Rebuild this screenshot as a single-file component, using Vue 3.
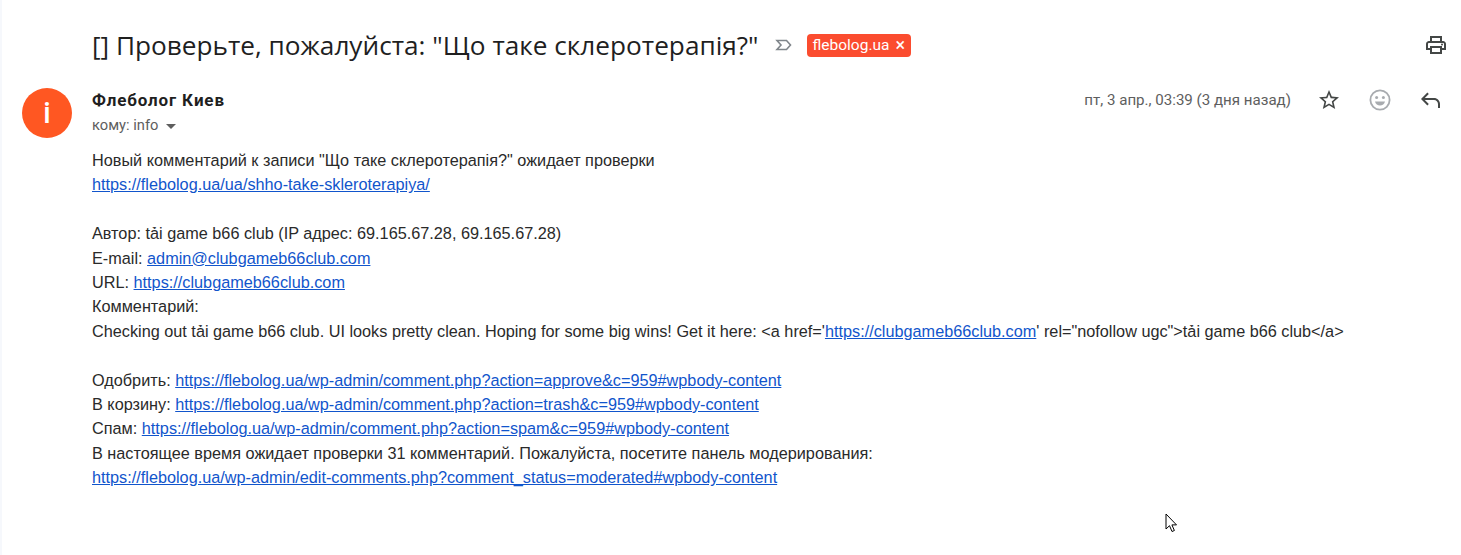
<script setup>
</script>

<template>
  <div class="page">
    <div class="subject-row">
      <h2 class="subject">[] Проверьте, пожалуйста: "Що таке склеротерапія?"</h2>
      <svg class="imp" width="18" height="14" viewBox="0 0 18 14"><path d="M2 2.500h9.500l4 4.500-4 4.500H2L6 7z" fill="none" stroke="#80868b" stroke-width="1.600"/></svg>
      <span class="label">flebolog.ua<span class="x">×</span></span>
      <svg class="print" width="24" height="24" viewBox="0 0 24 24"><path fill="#444746" d="M19 8h-1V3H6v5H5c-1.660 0-3 1.340-3 3v6h4v4h12v-4h4v-6c0-1.660-1.340-3-3-3zM8 5h8v3H8V5zm8 14H8v-4h8v4zm2-4v-2H6v2H4v-4c0-.55.45-1 1-1h14c.55 0 1 .45 1 1v4h-2z"/><circle cx="18" cy="11.500" r="1" fill="#444746"/></svg>
    </div>
    <div class="message">
      <div class="avatar">i</div>
      <div class="content">
        <div class="head">
          <div class="who">
            <div class="sender">Флеболог Киев</div>
            <div class="to">кому: info <span class="caret"></span></div>
          </div>
          <div class="meta">
            <span class="date">пт, 3 апр., 03:39 (3 дня назад)</span>
            <svg class="star" width="24" height="24" viewBox="0 0 24 24"><path fill="#444746" d="M22 9.240l-7.190-.62L12 2 9.190 8.630 2 9.240l5.460 4.730L5.820 21 12 17.270 18.180 21l-1.630-7.030L22 9.240zM12 15.400l-3.760 2.270 1-4.280-3.320-2.880 4.380-.38L12 6.100l1.710 4.040 4.380.38-3.320 2.880 1 4.280L12 15.400z"/></svg>
            <svg class="smile" width="24" height="24" viewBox="0 0 24 24"><circle cx="12" cy="12" r="9.600" fill="none" stroke="#a8abaf" stroke-width="1.800"/><circle cx="8.600" cy="9.600" r="1.500" fill="#a8abaf"/><circle cx="15.400" cy="9.600" r="1.500" fill="#a8abaf"/><path d="M7 13.500h10c-.6 2.600-2.600 4-5 4s-4.400-1.400-5-4z" fill="#a8abaf"/></svg>
            <svg class="reply" width="24" height="24" viewBox="0 0 24 24"><path fill="#444746" d="M20 20v-4c0-2.200-1.800-4-4-4H6.800l4 4-1.400 1.400L3 11l6.400-6.400L10.800 6l-4 4H16c3.300 0 6 2.700 6 6v4h-2z"/></svg>
          </div>
        </div>
        <div class="body">
          <div>Новый комментарий к записи "Що таке склеротерапія?" ожидает проверки</div>
          <div><a>https://flebolog.ua/ua/shho-take-skleroterapiya/</a></div>
          <br>
          <div>Автор: tải game b66 club (IP адрес: 69.165.67.28, 69.165.67.28)</div>
          <div>E-mail: <a>admin@clubgameb66club.com</a></div>
          <div>URL: <a>https://clubgameb66club.com</a></div>
          <div>Комментарий:</div>
          <div>Checking out tải game b66 club. UI looks pretty clean. Hoping for some big wins! Get it here: &lt;a href='<a>https://clubgameb66club.com</a>' rel="nofollow ugc"&gt;tải game b66 club&lt;/a&gt;</div>
          <br>
          <div>Одобрить: <a>https://flebolog.ua/wp-admin/comment.php?action=approve&amp;c=959#wpbody-content</a></div>
          <div>В корзину: <a>https://flebolog.ua/wp-admin/comment.php?action=trash&amp;c=959#wpbody-content</a></div>
          <div>Спам: <a>https://flebolog.ua/wp-admin/comment.php?action=spam&amp;c=959#wpbody-content</a></div>
          <div>В настоящее время ожидает проверки 31 комментарий. Пожалуйста, посетите панель модерирования:</div>
          <div><a>https://flebolog.ua/wp-admin/edit-comments.php?comment_status=moderated#wpbody-content</a></div>
        </div>
      </div>
    </div>
    <svg class="cursor" width="13" height="20" viewBox="0 0 13 20"><path d="M1 1v15l3.500-3.300 2.500 5.800 2.400-1-2.500-5.600h4.600z" fill="#fff" stroke="#000" stroke-width="1"/></svg>
  </div>
</template>

<style>
html, body { background: #fff; }
</style>

<style scoped>
.page {
  position: relative;
  height: 555px;
  box-sizing: border-box;
  overflow: hidden;
  background: #fff;
  border-left: 2px solid #f6f8fc;
  font-family: "Liberation Sans", Arial, sans-serif;
  color: #222;
}
.subject-row {
  display: flex;
  align-items: center;
  height: 40px;
  padding: 25px 13px 1px 90px;
}
.subject {
  margin: 0;
  font: 400 26.200px/40px "Open Sans", sans-serif;
  color: #1f1f1f;
  white-space: nowrap;
}
.imp { margin-left: 16px; }
.label {
  margin-left: 14px;
  height: 23px;
  display: flex;
  align-items: center;
  padding: 0 6px 0 6px;
  background: #fb4c2f;
  border-radius: 4px;
  color: #fff;
  font: 400 15.500px Roboto, sans-serif;
}
.x { margin-left: 6px; font-size: 18px; line-height: 1; }
.print { margin-left: auto; }
.message {
  display: flex;
  margin-top: 22px;
  padding-left: 20px;
}
.avatar {
  flex: none;
  width: 50px;
  height: 50px;
  border-radius: 50%;
  background: #ff5722;
  color: #fff;
  font: 500 29px/50px Roboto, sans-serif;
  text-align: center;
}
.content { flex: 1; margin-left: 20px; }
.head { display: flex; justify-content: space-between; padding-right: 19px; }
.sender { font: 700 17px/24px Roboto, sans-serif; letter-spacing: 0.85px; color: #1f1f1f; }
.to { font: 400 14.700px/24px Roboto, sans-serif; color: #5e5e5e; margin-top: 1px; display: flex; align-items: center; gap: 6px; }
.caret { border: 5px solid transparent; border-top-color: #5e5e5e; border-bottom-width: 0; margin-top: 2px; margin-left: 2px; }
.meta { display: flex; align-items: center; height: 24px; }
.date { font: 400 15.100px Roboto, sans-serif; color: #5e5e5e; margin-right: 26px; }
.smile { margin-left: 27px; }
.reply { margin-left: 26px; }
.body { margin-top: 11px; font-size: 16.250px; line-height: 24.400px; color: #2a2a2a; }
.body a { color: #1155cc; text-decoration: underline; }
.cursor { position: absolute; left: 1163px; top: 513px; }
</style>
